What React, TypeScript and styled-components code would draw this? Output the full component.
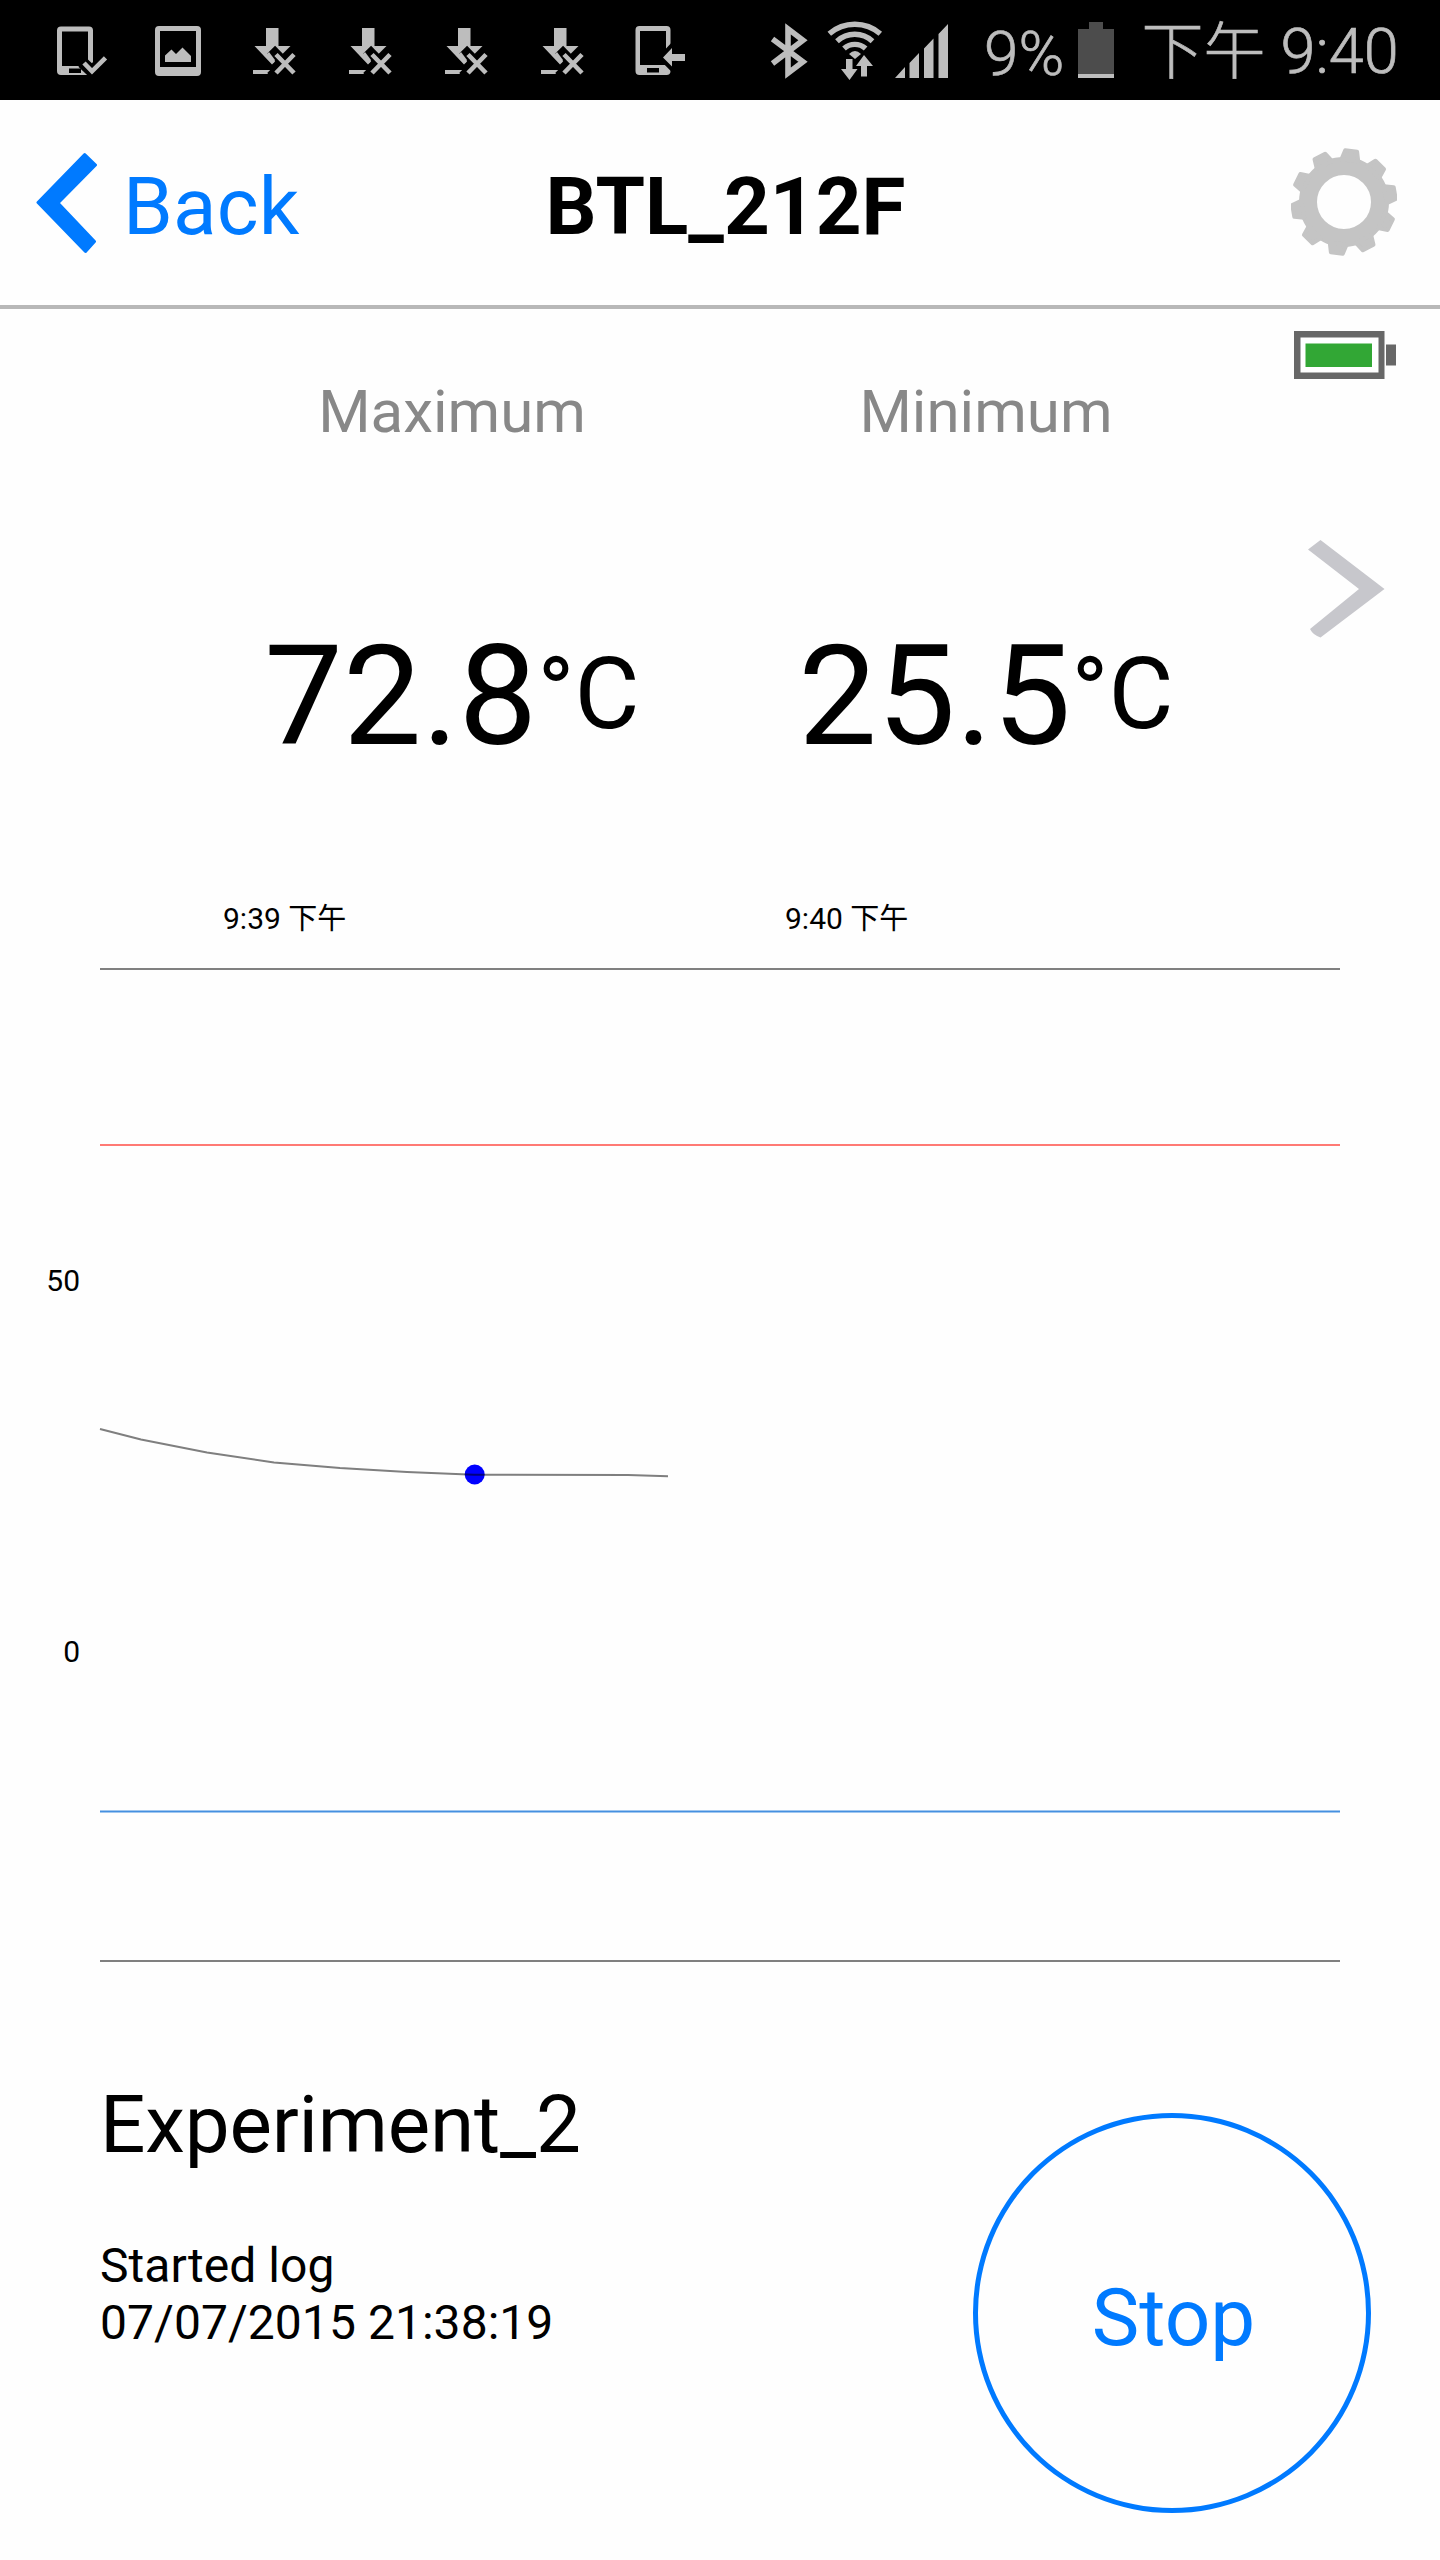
import React from "react";
import styled, { createGlobalStyle } from "styled-components";

const SANS = `Roboto, "Noto Sans CJK TC", sans-serif`;
const BLUE = "#007aff";
const STATUS = "#bdbdbd";

const Global = createGlobalStyle`
  * { box-sizing: border-box; }
  body { margin: 0; background: #fefefe; font-family: ${SANS}; color: #000; }
`;

const Screen = styled.div`
  width: 1440px;
  height: 2560px;
  display: flex;
  flex-direction: column;
  overflow: hidden;
  background: #fefefe;
`;

const StatusBar = styled.header`
  height: 100px;
  flex: none;
  display: flex;
  background: #000;
  color: ${STATUS};
`;

const Glyph = styled.svg<{ $gap: number }>`
  display: block;
  flex: none;
  height: 100px;
  margin-left: ${(p) => p.$gap}px;
`;

const StatusText = styled.span<{ $gap: number; $top: number; $size?: number }>`
  flex: none;
  height: 74px;
  margin-left: ${(p) => p.$gap}px;
  margin-top: ${(p) => p.$top}px;
  font-size: ${(p) => p.$size ?? 62}px;
  line-height: 74px;
  font-weight: 300;
  -webkit-text-stroke: 0.7px ${STATUS};
  white-space: pre;
`;

const NavBar = styled.nav`
  height: 209px;
  flex: none;
  display: flex;
  border-bottom: 4px solid #b8b8b8;
`;

const BackButton = styled.button`
  display: flex;
  width: 464px;
  margin: 0 0 0 36px;
  padding: 0;
  border: 0;
  background: none;
  color: ${BLUE};
  font: 400 80px/94px ${SANS};
  letter-spacing: 0.2px;
  text-align: left;
`;

const BackArrow = styled.svg`
  display: block;
  width: 62px;
  height: 102px;
  margin: 52px 25px 0 0;
`;

const NavLabel = styled.span`
  margin-top: 60px;
`;

const Title = styled.h1`
  width: 451px;
  margin: 60px 0 0;
  font-size: 80px;
  line-height: 94px;
  font-weight: 700;
  text-align: center;
`;

const Gear = styled.svg`
  display: block;
  width: 106px;
  height: 108px;
  margin: 48px 0 0 340px;
`;

const Readings = styled.section`
  height: 571px;
  flex: none;
  display: grid;
  grid-template-columns: 535px 533px 1fr;
  padding-left: 184.5px;
`;

const Reading = styled.div`
  display: flex;
  flex-direction: column;
  align-items: center;
  padding-top: 68px;
`;

const ReadingLabel = styled.div`
  font-size: 60px;
  line-height: 70px;
  color: #888;
`;

const ReadingValue = styled.div`
  display: flex;
  margin-top: 167px;
  font-size: 140px;
  line-height: 164px;
`;

const Unit = styled.span`
  padding-top: 21px;
  font-size: 100px;
  line-height: 117px;
`;

const Side = styled.div`
  display: flex;
  flex-direction: column;
  padding: 22px 0 0 41.5px;
`;

const Battery = styled.svg`
  display: block;
  width: 103px;
  height: 48px;
`;

const Chevron = styled.svg`
  display: block;
  width: 78px;
  height: 98px;
  margin: 161px 0 0 13px;
`;

const Chart = styled.svg`
  display: block;
  flex: none;
  width: 1440px;
  height: 1100px;
  font-family: ${SANS};
  font-size: 30px;
`;

const Footer = styled.footer`
  flex: 1;
  display: flex;
  justify-content: space-between;
  padding: 98px 69px 0 100px;
`;

const ExperimentName = styled.h2`
  margin: 0;
  font-size: 80px;
  line-height: 94px;
  font-weight: 400;
  letter-spacing: -0.2px;
`;

const LogInfo = styled.p`
  margin: 65px 0 0;
  font-size: 48px;
  line-height: 57px;
  letter-spacing: 0.05px;
`;

const StopButton = styled.button`
  width: 398px;
  height: 400px;
  margin-top: 35px;
  padding: 10px 0 0 3px;
  border: 5px solid ${BLUE};
  border-radius: 50%;
  background: none;
  color: ${BLUE};
  font: 400 80px/94px ${SANS};
`;

const PhoneCheck = () => (
  <Glyph $gap={54} width={56} viewBox="54 0 56 100">
    <path fill={STATUS} fillRule="evenodd" d="M61 26.5h28a4 4 0 0 1 4 4V71a4 4 0 0 1-4 4H61a4 4 0 0 1-4-4V30.500a4 4 0 0 1 4-4zM62 31.500V66h26V31.500zM69 68.500V73h12v-4.500z" />
    <path d="M82 62l10 9.500 14-14v22h-16z" fill="#000" />
    <path d="M82.500 62.500l9.500 9 15-15" fill="none" stroke="#000" strokeWidth="12" />
    <path d="M84 63l8 8.300 13.500-13.500" fill="none" stroke={STATUS} strokeWidth="4.600" />
  </Glyph>
);

const PictureFrame = () => (
  <Glyph $gap={45} width={46} viewBox="155 0 46 100">
    <path fill={STATUS} fillRule="evenodd" d="M159 26h38a4 4 0 0 1 4 4v42a4 4 0 0 1-4 4h-38a4 4 0 0 1-4-4V30a4 4 0 0 1 4-4zM160 31v36h36V31z" />
    <path fill={STATUS} d="M165 62v-6.500l6.500-6 4.500 4.500 6.500-6.500L191 56v6z" />
  </Glyph>
);

const DownloadFailed = ({ gap }: { gap: number }) => (
  <Glyph $gap={gap} width={44} viewBox="252 0 44 100">
    <path fill={STATUS} d="M266 28h12.500v18h12L272 64.500 254.500 46H266zM253 70h22v4h-22z" />
    <path d="M275 53.500l19 19.500M294 53.500l-19 19.500" stroke="#000" strokeWidth="11" strokeLinecap="square" />
    <path fill={STATUS} d="M266 55l3-3 6 8-1.500 3z" />
    <path d="M276 54.500l18 18.500M294 54.500l-18 18.500" stroke={STATUS} strokeWidth="4.600" />
  </Glyph>
);

const PhoneArrow = () => (
  <Glyph $gap={50} width={52} viewBox="634 0 52 100">
    <path fill={STATUS} fillRule="evenodd" d="M639.500 26h27a4 4 0 0 1 4 4v41a4 4 0 0 1-4 4h-27a4 4 0 0 1-4-4V30a4 4 0 0 1 4-4zM640 31v34h26V31zM647 68v4.500h12V68z" />
    <path d="M663 57.500l9-9.500v6h13v7h-13v5.500z" fill="#000" stroke="#000" strokeWidth="8" />
    <path d="M663 57.500l9-9.500v6h13v7h-13v5.500z" fill={STATUS} />
  </Glyph>
);

const Bluetooth = () => (
  <Glyph $gap={84} width={40} viewBox="770 0 40 100">
    <path d="M772.500 63.500L803 40.200 788 28.800V73.200L803 61.800 772.500 39" fill="none" stroke={STATUS} strokeWidth="5.600" />
  </Glyph>
);

const Wifi = () => (
  <Glyph $gap={16} width={58} viewBox="826 0 58 100">
    <g fill="none" stroke={STATUS} strokeWidth="5.400">
      <path d="M829.300 33.800A39 39 0 0 1 880.300 33.800" />
      <path d="M837 41.200A26 26 0 0 1 872.500 41.200" />
      <path d="M844 48.600A16 16 0 0 1 865.600 48.600" />
    </g>
    <path fill={STATUS} d="M849 54q6-6 12 0l-6 5z" />
    <path fill={STATUS} d="M846 59h6.500v10h5l-8 11-8.500-11h5zM861 76.500V66h-5l8-11 9 11h-6v10.500z" />
  </Glyph>
);

const Signal = () => (
  <Glyph $gap={11} width={53} viewBox="895 0 53 100">
    <path fill={STATUS} d="M895 78l10-11v11zM909.500 78V63l9.500-10v25zM924 78V48.500l9.500-10V78zM938.500 78V34l9.500-10v54z" />
  </Glyph>
);

const StatusBattery = () => (
  <Glyph $gap={0} width={36} viewBox="1078 0 36 100">
    <path fill="#4c4c4c" d="M1078 29h11v-7h14v7h11v45h-36z" />
    <path fill={STATUS} d="M1078 74h36v4h-36z" />
  </Glyph>
);

const PercentSlot = styled.div`
  width: 93px;
  margin-left: 36px;
  margin-right: 1px;
  flex: none;
  display: flex;
`;

const teeth = Array.from({ length: 10 }, (_, i) => 8 + i * 36);

const timeTicks = [
  { x: 223, time: "9:39", period: "下午" },
  { x: 785, time: "9:40", period: "下午" },
];
const valueTicks = [
  { y: 411, label: "50" },
  { y: 782, label: "0" },
];
const gridLines = [
  { y: 88, color: "#808080" },
  { y: 264, color: "#ff7a74" },
  { y: 930.5, color: "#4590e0" },
  { y: 1080, color: "#808080" },
];
const trace = "100,549 141,559.5 207,572.500 274,582.500 340,588 407,592 474,594.700 628,595 668,596.300";

export default function App() {
  return (
    <Screen>
      <Global />
      <StatusBar>
        <PhoneCheck />
        <PictureFrame />
        <DownloadFailed gap={51} />
        <DownloadFailed gap={52} />
        <DownloadFailed gap={52} />
        <DownloadFailed gap={52} />
        <PhoneArrow />
        <Bluetooth />
        <Wifi />
        <Signal />
        <PercentSlot>
          <StatusText $gap={0} $top={17}>9%</StatusText>
        </PercentSlot>
        <StatusBattery />
        <StatusText $gap={27.5} $top={16}>下午</StatusText>
        <StatusText $gap={15} $top={14.5} $size={63}>9:40</StatusText>
      </StatusBar>

      <NavBar>
        <BackButton>
          <BackArrow viewBox="36 152 62 102">
            <path
              d="M84.700 154.500L95.500 165 58 203 94.500 241.500 85.500 251.500 38 202.500z"
              fill={BLUE}
              stroke={BLUE}
              strokeWidth="3"
              strokeLinejoin="round"
            />
          </BackArrow>
          <NavLabel>Back</NavLabel>
        </BackButton>
        <Title>BTL_212F</Title>
        <Gear viewBox="1291 148 106 108">
          <circle cx="1344" cy="202" r="36" fill="none" stroke="#c4c4c4" strokeWidth="18" />
          {teeth.map((angle) => (
            <path
              key={angle}
              transform={`translate(1344 202) rotate(${angle})`}
              d="M-8.500-42L-6-51.500H6L8.500-42z"
              fill="#c4c4c4"
              stroke="#c4c4c4"
              strokeWidth="4"
              strokeLinejoin="round"
            />
          ))}
        </Gear>
      </NavBar>

      <Readings>
        <Reading>
          <ReadingLabel>Maximum</ReadingLabel>
          <ReadingValue>72.8<Unit>°C</Unit></ReadingValue>
        </Reading>
        <Reading>
          <ReadingLabel>Minimum</ReadingLabel>
          <ReadingValue>25.5<Unit>°C</Unit></ReadingValue>
        </Reading>
        <Side>
          <Battery viewBox="1294 331 103 48">
            <path fill="#676767" d="M1294 331h90.500v48H1294zM1386 344.500h10v21H1386z" />
            <path fill="#fff" d="M1300.500 337.500h78v35h-78z" />
            <path fill="#32a735" d="M1305.500 343.500h66.500V367h-66.500z" />
          </Battery>
          <Chevron viewBox="1307 540 78 98">
            <path fill="#c7c7cc" d="M1320.500 540L1384.500 589 1320.500 637.500Q1313 635 1310 629L1359 589 1308 549.500z" />
          </Chevron>
        </Side>
      </Readings>

      <Chart viewBox="0 0 1440 1100">
        {timeTicks.map((t) => (
          <text key={t.x} x={t.x} y={49}>
            {t.time} <tspan fontSize={29}>{t.period}</tspan>
          </text>
        ))}
        {valueTicks.map((t) => (
          <text key={t.y} x={80} y={t.y} textAnchor="end">{t.label}</text>
        ))}
        {gridLines.map((l) => (
          <rect key={l.y} x={100} y={l.y} width={1240} height={2} fill={l.color} />
        ))}
        <circle cx={474.7} cy={594.5} r={10} fill="#00f" />
        <polyline points={trace} fill="none" stroke="#000" strokeOpacity={0.5} strokeWidth={2} />
      </Chart>

      <Footer>
        <div>
          <ExperimentName>Experiment_2</ExperimentName>
          <LogInfo>
            Started log
            <br />
            07/07/2015 21:38:19
          </LogInfo>
        </div>
        <StopButton>Stop</StopButton>
      </Footer>
    </Screen>
  );
}
